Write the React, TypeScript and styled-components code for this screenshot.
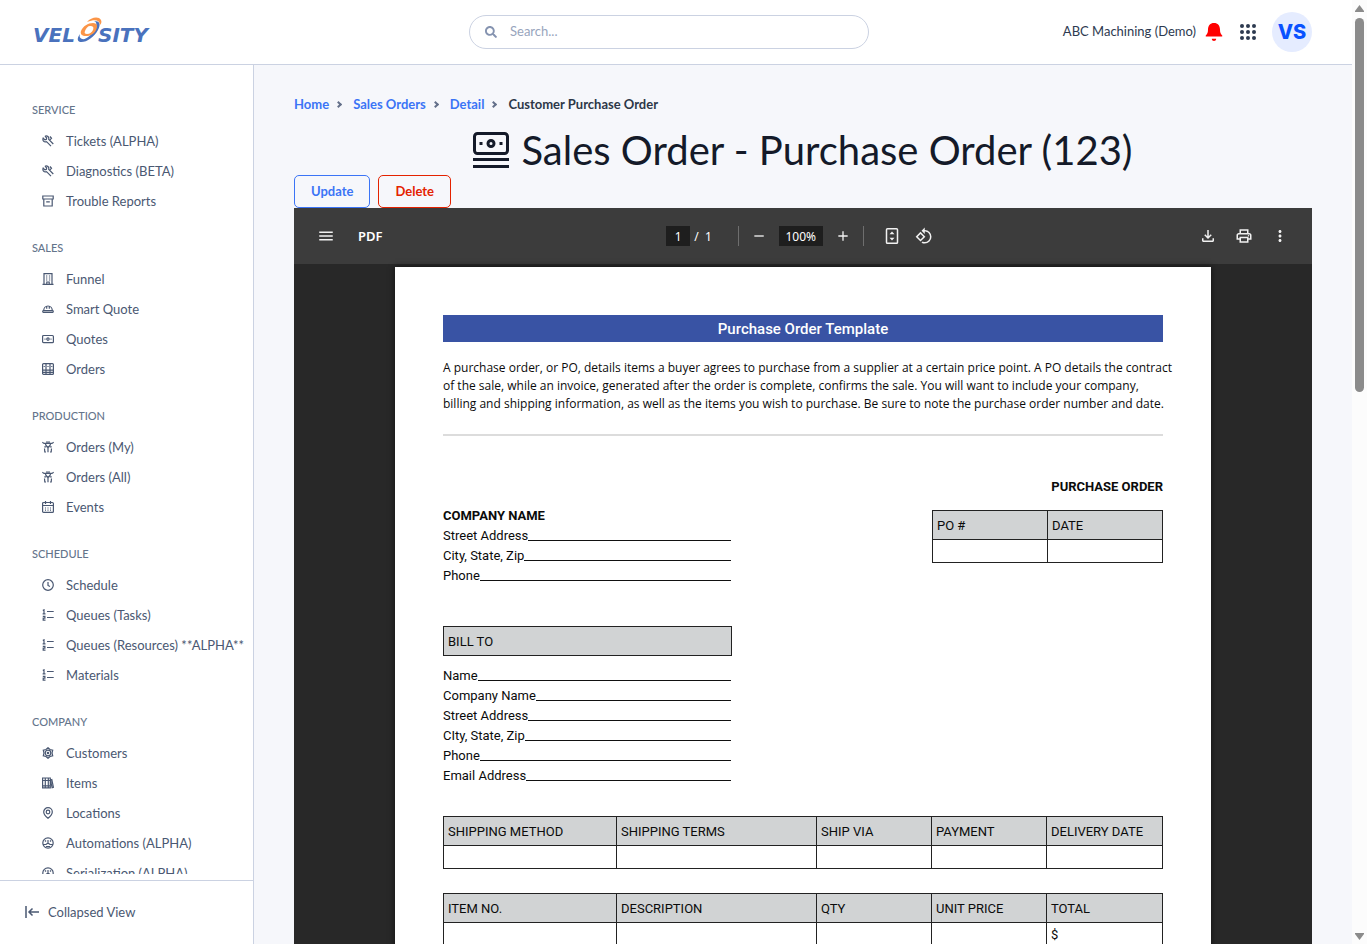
import React from "react";
import styled, { createGlobalStyle } from "styled-components";
import { FaSearch } from "react-icons/fa";
import {
  MdAdd,
  MdMenu,
  MdMoreVert,
  MdOutlineFileDownload,
  MdOutlinePrint,
  MdRemove,
  MdRotate90DegreesCcw,
} from "react-icons/md";

const ui = `Lato, "Open Sans", sans-serif`;
const docFont = `Roboto, "Liberation Sans", sans-serif`;

const GlobalStyle = createGlobalStyle`
  *, *::before, *::after { box-sizing: border-box; }
  body { margin: 0; font-family: ${ui}; font-size: 13px; color: #2d3748; background: #f6f7fb; }
  button, input { font: inherit; }
  h1, h2, h3, p, ul, ol { margin: 0; padding: 0; }
  ul, ol { list-style: none; }
  a { text-decoration: none; color: inherit; }
`;

const Window = styled.div`
  display: flex;
  height: 100vh;
  overflow: hidden;
`;

const Shell = styled.div`
  flex: 1;
  min-width: 0;
  display: flex;
  flex-direction: column;
`;

const ScrollTrack = styled.div`
  width: 15px;
  flex: none;
  display: flex;
  flex-direction: column;
  align-items: center;
  padding: 5px 0 4px;
  background: #fcfcfc;
`;

const ScrollArrow = styled.svg`
  width: 9px;
  height: 7px;
  fill: #8b8b8b;
`;

const ScrollThumb = styled.div`
  width: 9px;
  height: 40%;
  margin: 6px 0 auto;
  border-radius: 5px;
  background: #8b8b8b;
`;

const Header = styled.header`
  flex: none;
  display: grid;
  grid-template-columns: 1fr 400px 1fr;
  align-items: center;
  height: 65px;
  padding: 0 40px 0 26px;
  border-bottom: 1px solid #cbd2e2;
  background: #fff;
`;

const Logo = styled.svg`
  display: block;
  width: 132px;
  height: 36px;
`;

const LogoWord = styled.text`
  font: italic bold 20px "DejaVu Sans", sans-serif;
  fill: #4a72bd;
`;

const SearchBox = styled.label`
  display: flex;
  align-items: center;
  gap: 13px;
  height: 34px;
  padding: 0 15px;
  border: 1px solid #cbd2e2;
  border-radius: 17px;
  color: #8593b0;
`;

const SearchInput = styled.input`
  flex: 1;
  min-width: 0;
  padding: 0 0 2px;
  border: 0;
  outline: 0;
  background: transparent;
  &::placeholder { color: #98a5bd; opacity: 1; }
`;

const HeaderTools = styled.div`
  display: flex;
  align-items: center;
  justify-content: flex-end;
`;

const Tenant = styled.span`
  margin-right: 9px;
  padding-bottom: 2px;
  color: #2d3a50;
`;

const IconButton = styled.button<{ $gap?: number }>`
  display: flex;
  padding: 0;
  margin-right: ${(p) => p.$gap ?? 0}px;
  border: 0;
  background: none;
  color: inherit;
`;

const Avatar = styled.button`
  width: 40px;
  height: 40px;
  padding: 0;
  border: 0;
  border-radius: 50%;
  background: #e5ecff;
  color: #0a52ff;
  font: 800 20px/40px Inter, sans-serif;
`;

const Columns = styled.div`
  flex: 1;
  min-height: 0;
  display: flex;
`;

const Sidebar = styled.aside`
  flex: none;
  width: 254px;
  display: flex;
  flex-direction: column;
  border-right: 1px solid #cbd2e2;
  background: #fff;
`;

const Nav = styled.nav`
  flex: 1;
  min-height: 0;
  margin: 0 6px 6px 0;
  padding: 13px 0 0 32px;
  overflow: hidden;
`;

const NavHeading = styled.h2`
  margin: 24px 0 8px;
  font-size: 11px;
  font-weight: 500;
  line-height: 16px;
  color: #64748b;
`;

const NavLink = styled.a`
  display: flex;
  align-items: center;
  gap: 12px;
  height: 30px;
  padding-left: 10px;
  white-space: nowrap;
  color: #4a5872;
  svg { flex: none; }
`;

const CollapseBar = styled.div`
  flex: none;
  height: 64px;
  padding: 0 24px 2px;
  display: flex;
  align-items: center;
  border-top: 1px solid #cbd2e2;
`;

const CollapseButton = styled.button`
  display: flex;
  align-items: center;
  gap: 8px;
  padding: 0;
  border: 0;
  background: none;
  color: #4a5872;
`;

const Main = styled.main`
  flex: 1;
  min-width: 0;
  display: flex;
  flex-direction: column;
  padding: 29px 40px 0;
  background: #f6f7fb;
`;

const Crumbs = styled.ol`
  display: flex;
  align-items: center;
  height: 20px;
  font-weight: 700;
  li { display: flex; align-items: center; }
  li + li::before {
    content: "";
    width: 5px;
    height: 5px;
    margin: 0 12px 0 7px;
    border: solid #64708a;
    border-width: 2px 2px 0 0;
    rotate: 45deg;
  }
  a { color: #3b74f6; }
`;

const Title = styled.h1`
  display: flex;
  align-items: center;
  justify-content: center;
  gap: 12px;
  height: 61px;
  padding-top: 10px;
  font-size: 40px;
  font-weight: 400;
  line-height: 50px;
  color: #141a29;
  white-space: nowrap;
`;

const Actions = styled.div`
  display: flex;
  gap: 8px;
`;

const ActionButton = styled.button<{ $tone: string }>`
  height: 33px;
  padding: 0 16px 2px;
  border: 1px solid ${(p) => p.$tone};
  border-radius: 5px;
  background: transparent;
  color: ${(p) => p.$tone};
  font-weight: 700;
`;

const Viewer = styled.section`
  flex: 1;
  min-height: 0;
  display: flex;
  flex-direction: column;
  background: #282828;
  overflow: hidden;
`;

const Toolbar = styled.div`
  flex: none;
  display: grid;
  grid-template-columns: 1fr auto 1fr;
  align-items: center;
  height: 56px;
  padding: 0 23px;
  background: #3c3c3c;
  color: #f1f1f1;
  font-family: "Noto Sans", sans-serif;
`;

const ToolGroup = styled.div<{ $end?: boolean; $gap: number }>`
  display: flex;
  align-items: center;
  gap: ${(p) => p.$gap}px;
  justify-content: ${(p) => (p.$end ? "flex-end" : "flex-start")};
`;

const ViewerName = styled.span`
  font-weight: 600;
  color: #fff;
`;

const ToolInput = styled.input<{ $wide?: boolean }>`
  width: ${(p) => (p.$wide ? 44 : 24)}px;
  height: 20px;
  margin-right: ${(p) => (p.$wide ? 12 : 4)}px;
  padding: 0;
  border: 0;
  background: #1e1e1e;
  color: #fff;
  font-size: 12px;
  text-align: center;
`;

const PageTotal = styled.span`
  font-size: 12px;
  color: #fff;
  white-space: pre;
`;

const Divider = styled.span<{ $before: number; $after: number }>`
  width: 1px;
  height: 20px;
  margin: 0 ${(p) => p.$after}px 0 ${(p) => p.$before}px;
  background: #6e6e6e;
`;

const Page = styled.article`
  width: 816px;
  min-height: 1056px;
  flex: none;
  margin: 3px auto 0;
  padding: 48px;
  background: #fff;
  box-shadow: 0 0 6px #111;
  color: #0b0b0b;
  font-family: ${docFont};
`;

const Banner = styled.h2`
  height: 27px;
  background: #3953a4;
  color: #fff;
  font-size: 15px;
  font-weight: 500;
  line-height: 28px;
  text-align: center;
`;

const Intro = styled.p`
  margin-top: 17px;
  padding-bottom: 21px;
  border-bottom: 2px solid #dcdcdc;
  font-family: "Open Sans", sans-serif;
  font-size: 12px;
  line-height: 18px;
  white-space: nowrap;
`;

const TopRow = styled.div`
  display: flex;
  justify-content: space-between;
  margin-top: 41px;
`;

const Fields = styled.div<{ $top: number }>`
  width: 288px;
  margin-top: ${(p) => p.$top}px;
`;

const Field = styled.div`
  display: flex;
  height: 20px;
  line-height: 20px;
`;

const Rule = styled.span`
  flex: 1;
  height: 15px;
  border-bottom: 1px solid #111;
`;

const DocHeading = styled.h3<{ $right?: boolean }>`
  height: 20px;
  font-size: 13px;
  font-weight: 700;
  line-height: 20px;
  text-align: ${(p) => (p.$right ? "right" : "left")};
`;

const OrderBox = styled.div`
  width: 231px;
`;

const BillTo = styled.h3`
  width: 289px;
  height: 30px;
  margin-top: 40px;
  padding-left: 4px;
  border: 1px solid #222;
  background: #d1d3d4;
  font-size: 13px;
  font-weight: 400;
  line-height: 29px;
`;

const DocTable = styled.table<{ $top: number }>`
  width: 100%;
  margin-top: ${(p) => p.$top}px;
  border-collapse: collapse;
  table-layout: fixed;
  th, td { padding: 0 0 0 4px; border: 1px solid #222; text-align: left; font-weight: 400; }
  th { height: 29px; background: #d1d3d4; }
  td { height: 23px; }
`;

type IconProps = { name: string };

const iconShapes: Record<string, React.ReactNode> = {
  wrench: (
    <>
      <path d="M3 1.200 4.700 3 4.300 4.400 2.900 4.800 1.200 3.100C.2 5.500 2 7.500 4.500 6.700L9 11.200" />
      <path d="M3 1.200C5.300.2 7.300 2 6.700 4.300L11.300 9M8 1.500l1.500 1.800L8 4.800" />
    </>
  ),
  archive: <path d="M.8 1h10.400v3H.8zM1.800 4v7h8.400V4M4.200 6.800h3.600" />,
  building: (
    <>
      <path d="M2 11.500V.6h8v10.900M.5 11.400h11M4.800 11.500V9h2.400v2.500" />
      <path d="M4 3h1.300M6.900 3h1.300M4 5h1.300M6.900 5h1.300M4 7h1.300M6.900 7h1.300" />
    </>
  ),
  helmet: <path d="M1.300 9.400h9.400c.8 0 .8-1.600 0-1.800H1.300c-.8.2-.8 1.800 0 1.800zM1.700 7.500C1.700 5 3.500 3 6 3s4.300 2 4.300 4.500M4.700 3.300v2.500M7.300 3.300v2.500" />,
  banknote: (
    <>
      <rect x=".6" y="2.500" width="10.800" height="7.200" rx="1" />
      <circle cx="6" cy="6.100" r="1.200" />
      <path d="M2.500 6.100h1M8.500 6.100h1" />
    </>
  ),
  grid: (
    <>
      <rect x=".6" y=".6" width="10.800" height="10.800" rx="1" />
      <path d="M.5 7.200h11M.5 9.400h11M4 .5v11M8 .5v11M2.200 3v1M6 3v1M9.800 3v1" />
    </>
  ),
  worker: (
    <>
      <path d="M.3 1.200 2 2.400h8l1.700-1.200M3.300 2.500C3.300 4 4.500 5.200 6 6.500 7.500 5.200 8.700 4 8.700 2.500M4 1h4" />
      <path d="M2.300 5.800h2M7.700 5.800h2M2.500 7.500l.3 3.500h1.200M9.500 7.500l-.3 3.500H8M6 6.500v4.800" />
    </>
  ),
  calendar: (
    <>
      <rect x=".6" y="1.500" width="10.800" height="9.900" rx="1" />
      <path d="M.5 4.500h11M3.500 0v3M8.500 0v3" />
      <path d="M3 7h6.500M3 9.200h6.500" strokeDasharray="1 1.500" />
    </>
  ),
  clock: (
    <>
      <circle cx="6" cy="6" r="5.300" />
      <path d="M6 3v3.500L8 7.500" />
    </>
  ),
  ordered: <path d="M5 2.500h6.700M5 8.500h6.700M.8 1.500 2 .8v4M.6 4.800h2.900M.8 7.300h2.100v1.800H1.200v2h2.300" />,
  atom: (
    <>
      <circle cx="6" cy="6" r="2.800" />
      <circle cx="6" cy="6" r=".7" />
      <path d="M6 .7 8 2.500 10.700 3.200 10 6l.7 2.800L8 9.500 6 11.300 4 9.500 1.300 8.800 2 6l-.7-2.800L4 2.500z" />
    </>
  ),
  books: <path d="M.6 1h2.700v9.800H.6zM3.300 1h3v9.800h-3zM.6 3.500h7.600M6.300 1h2v9.800h-2zM8.500 3l1.300-.4 1.600 7.800-1.300.4zM.6 8.800h7.600" />,
  pin: (
    <>
      <path d="M6 11.300C3.200 9 1.700 7.200 1.700 5a4.300 4.300 0 0 1 8.600 0c0 2.200-1.500 4-4.300 6.300z" />
      <circle cx="6" cy="5" r="1.800" />
    </>
  ),
  gauge: (
    <>
      <circle cx="6" cy="6" r="5.200" />
      <path d="M1 7.500h3L6 6l2 1.500h3M6 3v3M3 3.500l1 1M9 3.500l-1 1M4 9.500h4" />
    </>
  ),
};

const NavIcon = ({ name }: IconProps) => (
  <svg width="12" height="12" viewBox="0 0 12 12" fill="none" stroke="currentColor" strokeWidth="1.200" aria-hidden="true">
    {iconShapes[name]}
  </svg>
);

const sections = [
  { title: "SERVICE", items: [["wrench", "Tickets (ALPHA)"], ["wrench", "Diagnostics (BETA)"], ["archive", "Trouble Reports"]] },
  { title: "SALES", items: [["building", "Funnel"], ["helmet", "Smart Quote"], ["banknote", "Quotes"], ["grid", "Orders"]] },
  { title: "PRODUCTION", items: [["worker", "Orders (My)"], ["worker", "Orders (All)"], ["calendar", "Events"]] },
  {
    title: "SCHEDULE",
    items: [["clock", "Schedule"], ["ordered", "Queues (Tasks)"], ["ordered", "Queues (Resources) **ALPHA**"], ["ordered", "Materials"]],
  },
  {
    title: "COMPANY",
    items: [["atom", "Customers"], ["books", "Items"], ["pin", "Locations"], ["gauge", "Automations (ALPHA)"], ["gauge", "Serialization (ALPHA)"]],
  },
];

const columns = [173, 200, 115, 115, 116];

const Cols = () => (
  <colgroup>
    {columns.map((w, i) => (
      <col key={i} width={w} />
    ))}
  </colgroup>
);

const HeadRow = ({ labels }: { labels: string[] }) => (
  <thead>
    <tr>
      {labels.map((l) => (
        <th key={l} scope="col">{l}</th>
      ))}
    </tr>
  </thead>
);

const FieldList = ({ labels }: { labels: string[] }) => (
  <>
    {labels.map((l) => (
      <Field key={l}>
        <span>{l}</span>
        <Rule />
      </Field>
    ))}
  </>
);

export default function App() {
  return (
    <Window>
      <GlobalStyle />
      <Shell>
        <Header>
          <a href="#home" aria-label="Velosity">
            <Logo viewBox="0 0 132 36">
              <LogoWord x="7" y="28">VEL</LogoWord>
              <LogoWord x="72" y="28">SITY</LogoWord>
              <path d="M54 20c-3 4-3 7 0 8 6 1 14-5 18-12 3-6 2-9-4-9 3 1 3 4 1 8-3 6-9 11-13 10-2-1-3-2-2-5z" fill="#4a72bd" />
              <path fillRule="evenodd" d="M55 17c2-5 7-8 12-8 4 0 5 3 3 7-2 4-6 6-10 6-4 0-6-2-5-5zm4 0c-1 2 0 3 2 3 3 0 5-2 6-4 1-3 0-4-3-4-2 0-4 2-5 5z" fill="#fb9548" />
              <path d="M61 8c4-5 12-6 14-2 1 2 0 4-1 5 0-5-5-6-13-3z" fill="#fb9548" />
            </Logo>
          </a>
          <SearchBox>
            <FaSearch size={12} aria-hidden="true" />
            <SearchInput type="search" placeholder="Search..." aria-label="Search" />
          </SearchBox>
          <HeaderTools>
            <Tenant>ABC Machining (Demo)</Tenant>
            <IconButton $gap={17} aria-label="Notifications">
              <svg width="18" height="20" viewBox="0 0 18 20" fill="#ff0000">
                <path d="M9 1c3.800 0 6 2.700 6 6.500 0 3 .6 4.500 2.200 6 .3.400.1 1-.5 1H1.300c-.6 0-.8-.6-.5-1C2.400 12 3 10.500 3 7.500 3 3.700 5.200 1 9 1z" />
                <path d="M6.800 16.800h4.400c0 3-4.400 3-4.400 0z" />
              </svg>
            </IconButton>
            <IconButton $gap={16} aria-label="Applications">
              <svg width="16" height="16" viewBox="0 0 16 16" fill="#2d3a50">
                {[2, 8, 14].map((y) => [2, 8, 14].map((x) => <circle key={`${x}-${y}`} cx={x} cy={y} r="2" />))}
              </svg>
            </IconButton>
            <Avatar>VS</Avatar>
          </HeaderTools>
        </Header>
        <Columns>
          <Sidebar>
            <Nav>
              {sections.map((s) => (
                <section key={s.title}>
                  <NavHeading>{s.title}</NavHeading>
                  <ul>
                    {s.items.map(([icon, label]) => (
                      <li key={label}>
                        <NavLink href="#nav">
                          <NavIcon name={icon} />
                          <span>{label}</span>
                        </NavLink>
                      </li>
                    ))}
                  </ul>
                </section>
              ))}
            </Nav>
            <CollapseBar>
              <CollapseButton>
                <svg width="16" height="12" viewBox="0 0 16 12" fill="none" stroke="currentColor" strokeWidth="1.500">
                  <path d="M2 0v12M15 6H5M8.500 2.500 5 6l3.500 3.500" />
                </svg>
                <span>Collapsed View</span>
              </CollapseButton>
            </CollapseBar>
          </Sidebar>
          <Main>
            <nav aria-label="Breadcrumb">
              <Crumbs>
                <li><a href="#home">Home</a></li>
                <li><a href="#orders">Sales Orders</a></li>
                <li><a href="#detail">Detail</a></li>
                <li>Customer Purchase Order</li>
              </Crumbs>
            </nav>
            <Title>
              <svg width="36" height="36" viewBox="0 0 36 36" fill="none" stroke="currentColor" strokeWidth="3" aria-hidden="true">
                <rect x="1.500" y="1.500" width="33" height="20" rx="3" />
                <circle cx="18" cy="11.500" r="3" />
                <path d="M6.500 11.500h3M26.500 11.500h3M0 27.500h36M0 34.500h36" />
              </svg>
              <span>Sales Order - Purchase Order (123)</span>
            </Title>
            <Actions>
              <ActionButton $tone="#3b74f6">Update</ActionButton>
              <ActionButton $tone="#e42200">Delete</ActionButton>
            </Actions>
            <Viewer>
              <Toolbar>
                <ToolGroup $gap={23}>
                  <IconButton aria-label="Menu"><MdMenu size={18} /></IconButton>
                  <ViewerName>PDF</ViewerName>
                </ToolGroup>
                <ToolGroup $gap={0}>
                  <ToolInput defaultValue="1" aria-label="Page number" />
                  <PageTotal>/  1</PageTotal>
                  <Divider $before={26} $after={12} />
                  <IconButton $gap={12} aria-label="Zoom out"><MdRemove size={16} /></IconButton>
                  <ToolInput $wide defaultValue="100%" aria-label="Zoom level" />
                  <IconButton $gap={12} aria-label="Zoom in"><MdAdd size={16} /></IconButton>
                  <Divider $before={0} $after={20} />
                  <IconButton $gap={15} aria-label="Fit to page">
                    <svg width="16" height="16" viewBox="0 0 16 16" fill="none" stroke="currentColor" strokeWidth="1.500">
                      <rect x="2.500" y=".8" width="11" height="14.500" rx="1" />
                      <path d="M5.500 6.200 8 3.500l2.500 2.700zM5.500 9.800 8 12.500l2.500-2.700z" fill="currentColor" stroke="none" />
                    </svg>
                  </IconButton>
                  <IconButton $gap={7} aria-label="Rotate"><MdRotate90DegreesCcw size={18} /></IconButton>
                </ToolGroup>
                <ToolGroup $gap={18} $end>
                  <IconButton aria-label="Download"><MdOutlineFileDownload size={18} /></IconButton>
                  <IconButton aria-label="Print"><MdOutlinePrint size={18} /></IconButton>
                  <IconButton aria-label="More"><MdMoreVert size={18} /></IconButton>
                </ToolGroup>
              </Toolbar>
              <Page>
                <Banner>Purchase Order Template</Banner>
                <Intro>
                  A purchase order, or PO, details items a buyer agrees to purchase from a supplier at a certain price point. A PO details the contract
                  <br />
                  of the sale, while an invoice, generated after the order is complete, confirms the sale. You will want to include your company,
                  <br />
                  billing and shipping information, as well as the items you wish to purchase. Be sure to note the purchase order number and date.
                </Intro>
                <TopRow>
                  <Fields $top={29}>
                    <DocHeading>COMPANY NAME</DocHeading>
                    <FieldList labels={["Street Address", "City, State, Zip", "Phone"]} />
                  </Fields>
                  <OrderBox>
                    <DocHeading $right>PURCHASE ORDER</DocHeading>
                    <DocTable $top={13}>
                      <HeadRow labels={["PO #", "DATE"]} />
                      <tbody><tr><td /><td /></tr></tbody>
                    </DocTable>
                  </OrderBox>
                </TopRow>
                <BillTo>BILL TO</BillTo>
                <Fields $top={10}>
                  <FieldList labels={["Name", "Company Name", "Street Address", "CIty, State, Zip", "Phone", "Email Address"]} />
                </Fields>
                <DocTable $top={30}>
                  <Cols />
                  <HeadRow labels={["SHIPPING METHOD", "SHIPPING TERMS", "SHIP VIA", "PAYMENT", "DELIVERY DATE"]} />
                  <tbody><tr><td /><td /><td /><td /><td /></tr></tbody>
                </DocTable>
                <DocTable $top={24}>
                  <Cols />
                  <HeadRow labels={["ITEM NO.", "DESCRIPTION", "QTY", "UNIT PRICE", "TOTAL"]} />
                  <tbody><tr><td /><td /><td /><td /><td>$</td></tr></tbody>
                </DocTable>
              </Page>
            </Viewer>
          </Main>
        </Columns>
      </Shell>
      <ScrollTrack aria-hidden="true">
        <ScrollArrow viewBox="0 0 9 7"><path d="M4.500 0 9 6v1H0V6z" /></ScrollArrow>
        <ScrollThumb />
        <ScrollArrow viewBox="0 0 9 7"><path d="M0 0h9v1L4.500 7 0 1z" /></ScrollArrow>
      </ScrollTrack>
    </Window>
  );
}
